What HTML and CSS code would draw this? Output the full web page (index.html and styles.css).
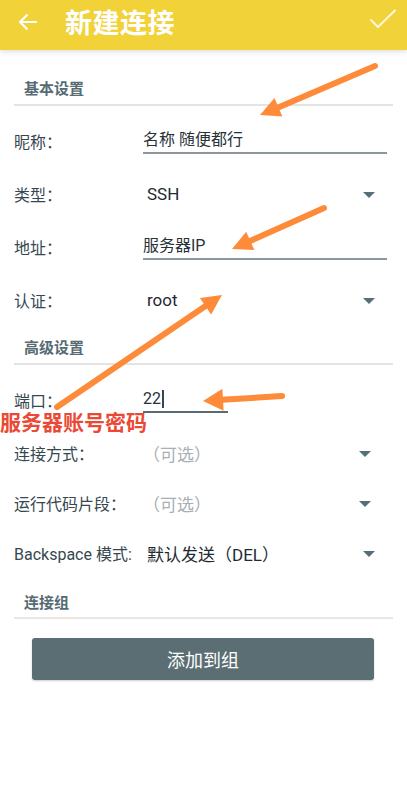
FILE: index.html
```html
<!DOCTYPE html>
<html lang="zh-CN">
<head>
  <meta charset="UTF-8" />
  <meta name="viewport" content="width=device-width, initial-scale=1" />
  <title>新建连接</title>
  <link rel="stylesheet" href="styles.css">
</head>
<body>
  <div class="page">
    <div class="toolbar">
      <svg class="back" width="20" height="18" viewBox="0 0 20 18">
        <path d="M19 9H2M9.5 1.5L2 9l7.5 7.5" fill="none" stroke="#fff" stroke-width="2.2" />
      </svg>
      <div class="title">新建连接</div>
      <svg class="check" width="28" height="20" viewBox="0 0 28 20">
        <path d="M1.5 10.5l7.5 7.5L26.5 1" fill="none" stroke="#fbf6dc" stroke-width="2" />
      </svg>
    </div>

    <!-- 基本设置 -->
    <div class="section-title first">基本设置</div>
    <div class="rows">
      <div class="row">
        <div class="label">昵称：</div>
        <div class="field input">名称 随便都行</div>
      </div>
      <div class="row">
        <div class="label">类型：</div>
        <div class="field spinner">SSH<span class="caret"></span></div>
      </div>
      <div class="row">
        <div class="label">地址：</div>
        <div class="field input">服务器IP</div>
      </div>
      <div class="row">
        <div class="label">认证：</div>
        <div class="field spinner">root<span class="caret"></span></div>
      </div>
    </div>

    <!-- 高级设置 -->
    <div class="section-title">高级设置</div>
    <div class="rows">
      <div class="row port-row">
        <div class="label">端口：</div>
        <div class="field input focused">22<span class="cursor"></span></div>
      </div>
      <div class="row short">
        <div class="label">连接方式：</div>
        <div class="field spinner hint">（可选）<span class="caret"></span></div>
      </div>
      <div class="row short">
        <div class="label">运行代码片段：</div>
        <div class="field spinner hint">（可选）<span class="caret"></span></div>
      </div>
      <div class="row short">
        <div class="label">Backspace 模式:</div>
        <div class="field spinner">默认发送（DEL）<span class="caret"></span></div>
      </div>
    </div>

    <!-- 连接组 -->
    <div class="section-title group">连接组</div>
    <button class="add-btn">添加到组</button>

    <!-- annotations drawn over the screenshot -->
    <svg class="marks" width="407" height="795" viewBox="0 0 407 795">
      <g stroke="#fe8b3a" stroke-width="6" stroke-linecap="round">
        <line x1="375" y1="66" x2="277" y2="108" />
        <line x1="324" y1="208" x2="249" y2="241.5" />
        <line x1="57" y1="407" x2="207" y2="305" />
        <line x1="282" y1="396" x2="222" y2="399.8" />
      </g>
      <g fill="#fe8b3a">
        <polygon points="260,115 282.3,116.4 274.5,98" />
        <polygon points="232,249 254.4,250 246.2,231.8" />
        <polygon points="222,295 211.1,314.5 199.9,297.9" />
        <polygon points="203,401 223.6,410.7 222.4,388.7" />
      </g>
    </svg>
    <div class="note">服务器账号密码</div>
  </div>
</body>
</html>
```

FILE: styles.css
```css
body {
  margin: 0;
  background: #fff;
  font-family: Roboto, "Noto Sans CJK SC", sans-serif;
  color: #37474f;
}
.page {
  position: relative;
  width: 407px;
  height: 795px;
  overflow: hidden;
}
.toolbar {
  height: 50px;
  background: #f1d238;
  display: flex;
  align-items: center;
  padding: 0 10px 0 18px;
  box-shadow: 0 2px 5px rgba(0, 0, 0, 0.12);
  position: relative;
}
.back {
  margin-top: -6px;
}
.title {
  margin-left: 27px;
  margin-top: -7px;
  color: #fff;
  font-size: 27px;
  font-weight: bold;
  letter-spacing: 0.5px;
  flex: 1;
}
.check {
  margin-top: -12px;
}
.section-title {
  margin: 0 14px;
  padding: 12px 10px 5px;
  line-height: 20px;
  font-size: 15px;
  font-weight: bold;
  color: #566b73;
  border-bottom: 2px solid #e4e4e4;
}
.section-title.first {
  padding-top: 29px;
}
.section-title.group {
  padding-top: 15px;
  padding-bottom: 4px;
  border-bottom-color: #ebe5e3;
}
.rows {
  padding-top: 8px;
}
.row {
  height: 53px;
  display: flex;
  align-items: center;
  padding-left: 14px;
}
.row.port-row {
  margin-bottom: 2px;
}
.row.short {
  height: 50px;
}
.label {
  width: 129px;
  font-size: 16px;
  color: #37474f;
}
.field {
  position: relative;
  width: 244px;
  font-size: 16px;
  color: #263238;
}
.field.input {
  box-sizing: border-box;
  height: 24px;
  line-height: 20px;
  margin-top: 2px;
  border-bottom: 2px solid #8d979b;
}
.field.focused {
  width: 85px;
  border-bottom-color: #566b73;
}
.cursor {
  display: inline-block;
  width: 2px;
  height: 18px;
  background: #37474f;
  vertical-align: -4px;
  margin-left: 1px;
}
.field.spinner {
  padding-left: 4px;
  font-size: 17px;
  color: #1f2a30;
}
.field.hint {
  color: #a9afb2;
  padding-left: 0;
}
.caret {
  position: absolute;
  right: 16px;
  top: 50%;
  margin-top: -2px;
  border-left: 6px solid transparent;
  border-right: 6px solid transparent;
  border-top: 6px solid #546e7a;
}
.add-btn {
  display: block;
  margin: 19px 0 0 32px;
  width: 342px;
  height: 42px;
  border: none;
  border-radius: 3px;
  background: #5b6e74;
  color: #fff;
  font-family: inherit;
  font-size: 18px;
  box-shadow: 0 1px 2px rgba(0, 0, 0, 0.2);
}
.marks {
  position: absolute;
  left: 0;
  top: 0;
  pointer-events: none;
}
.note {
  position: absolute;
  left: 0;
  top: 409px;
  font-size: 21px;
  font-weight: bold;
  color: #ea4a35;
  line-height: 28px;
}
```
